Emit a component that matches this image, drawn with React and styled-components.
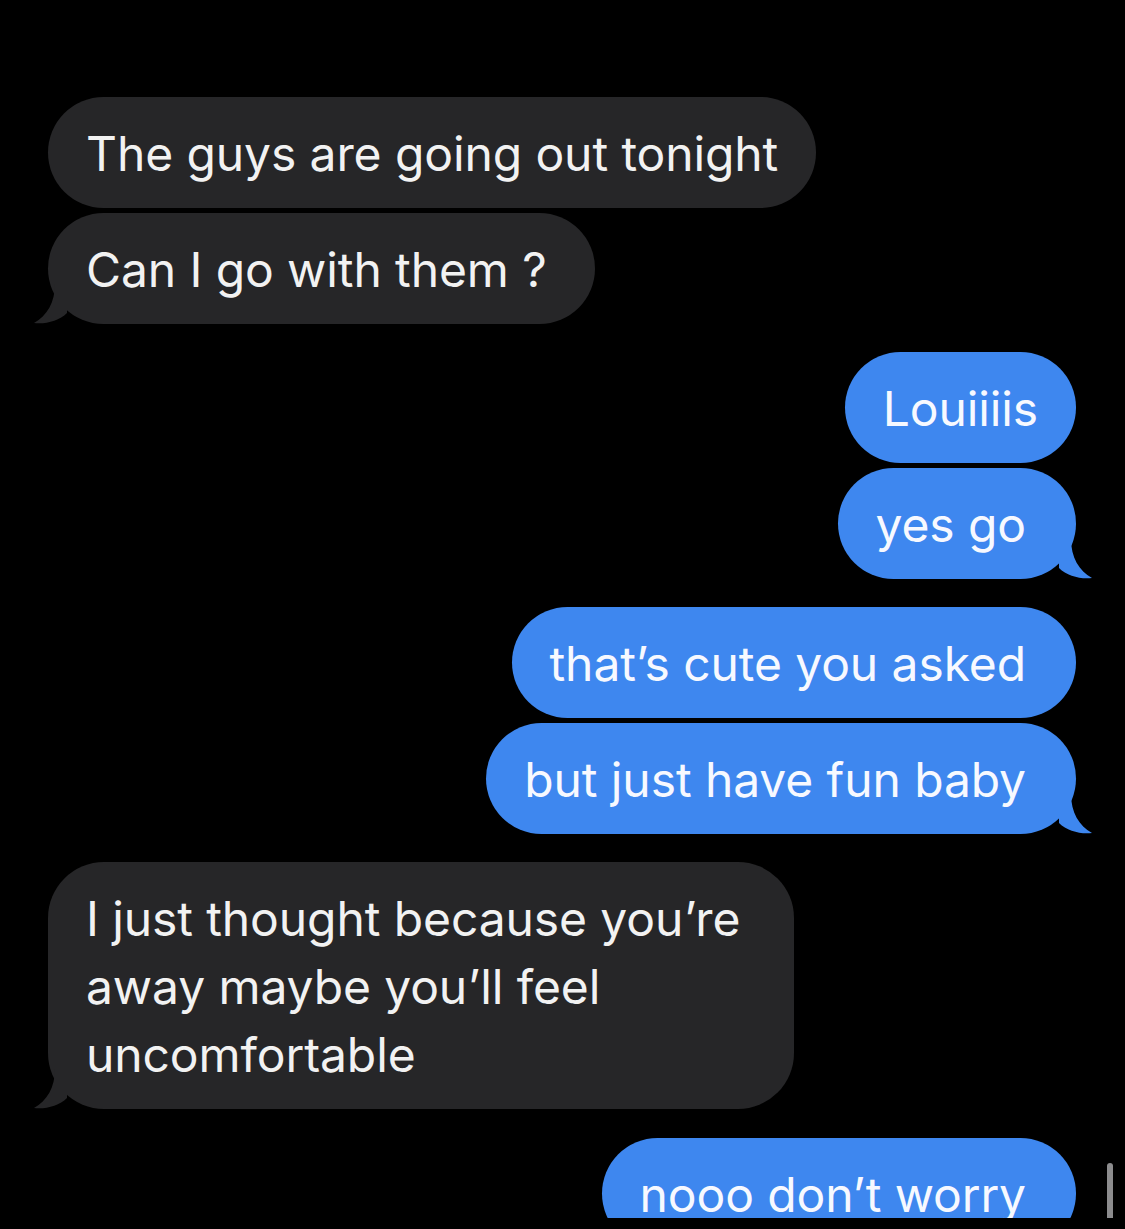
import React from "react";
import styled, { createGlobalStyle } from "styled-components";

const GlobalStyle = createGlobalStyle`
  html, body {
    margin: 0;
    padding: 0;
    background: #000;
  }
  body {
    font-family: Inter, "Noto Sans", "Liberation Sans", sans-serif;
    -webkit-font-smoothing: antialiased;
  }
`;

const Screen = styled.div`
  position: relative;
  width: 1125px;
  height: 1218px;
  overflow: hidden;
  background: #000;
`;

const Thread = styled.div`
  display: flex;
  flex-direction: column;
  gap: 28.5px;
  padding: 97px 49px 0 48px;
`;

const Group = styled.div`
  display: flex;
  flex-direction: column;
  gap: 4.5px;
  align-items: ${(p) => (p.$mine ? "flex-end" : "flex-start")};
`;

const Bubble = styled.div`
  position: relative;
  box-sizing: border-box;
  max-width: ${(p) => p.$max || "790px"};
  padding: 23px ${(p) => p.$padR || 38}px 20px 38px;
  border-radius: 56px;
  background: ${(p) => (p.$mine ? "#3e87ef" : "#262628")};
  color: ${(p) => (p.$mine ? "#f7f9ff" : "#f2f2f2")};
  font-size: 48px;
  line-height: 68px;
  letter-spacing: -0.1px;
`;

const Tail = styled.svg`
  position: absolute;
  bottom: 0;
  width: 34px;
  height: 40px;
  ${(p) => (p.$mine ? "right: -17px; transform: scaleX(-1);" : "left: -15px;")}
`;

const ScrollThumb = styled.div`
  position: absolute;
  left: 1107px;
  top: 1163px;
  width: 6px;
  height: 70px;
  border-radius: 3px;
  background: #8c8c8e;
`;

const BubbleTail = ({ mine }) => (
  <Tail $mine={mine} viewBox="0 0 34 40">
    <path
      d="M34 0 L22 0 C22 18 14 32 1 39 C12 40.5 26 37 34 29 Z"
      fill={mine ? "#3e87ef" : "#262628"}
    />
  </Tail>
);

const groups = [
  {
    mine: false,
    msgs: [
      { text: "The guys are going out tonight", pad: 38 },
      { text: "Can I go with them ?", pad: 48 },
    ],
  },
  {
    mine: true,
    msgs: [
      { text: "Louiiiis", pad: 38 },
      { text: "yes go", pad: 50 },
    ],
  },
  {
    mine: true,
    msgs: [
      { text: "that’s cute you asked", pad: 50 },
      { text: "but just have fun baby", pad: 50 },
    ],
  },
  {
    mine: false,
    max: "746px",
    msgs: [
      { text: "I just thought because you’re away maybe you’ll feel uncomfortable", pad: 38 },
    ],
  },
  { mine: true, open: true, msgs: [{ text: "nooo don’t worry", pad: 50 }] },
];

const App = () => {
  return (
    <Screen>
      <GlobalStyle />
      <Thread>
        {groups.map((g, gi) => (
          <Group key={gi} $mine={g.mine}>
            {g.msgs.map((m, i) => (
              <Bubble key={i} $mine={g.mine} $max={g.max} $padR={m.pad}>
                {m.text}
                {i === g.msgs.length - 1 && !g.open && <BubbleTail mine={g.mine} />}
              </Bubble>
            ))}
          </Group>
        ))}
      </Thread>
      <ScrollThumb />
    </Screen>
  );
};

export default App;
